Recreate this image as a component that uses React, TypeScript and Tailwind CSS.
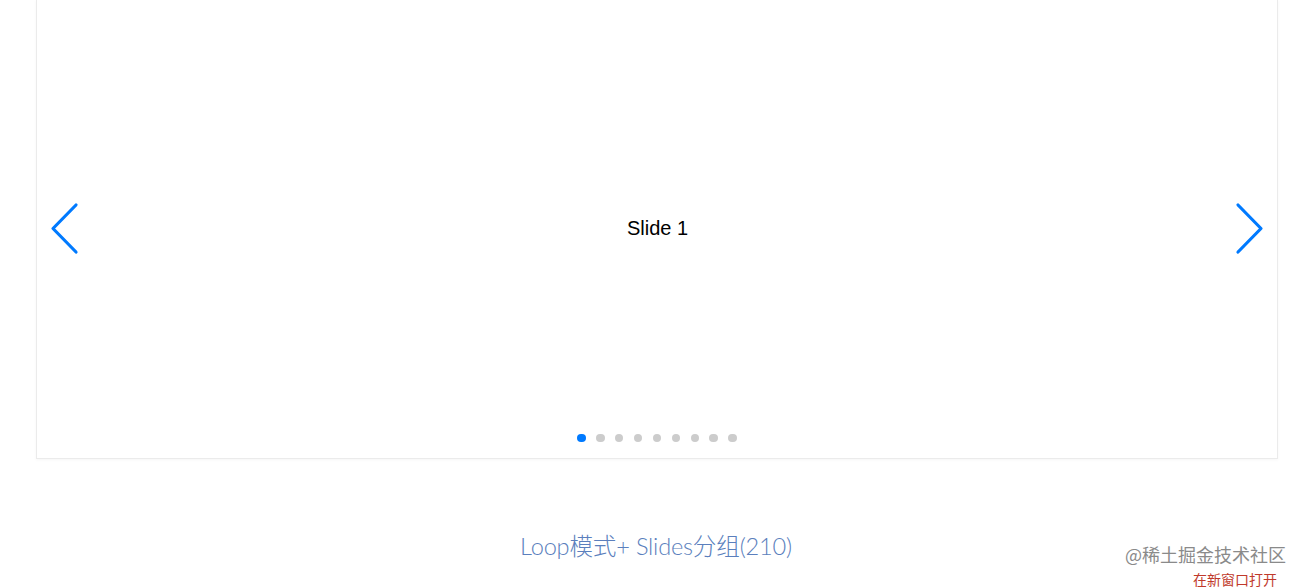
const dots = Array.from({ length: 9 }, (_, i) => i);

function Arrow({ dir }: { dir: 'prev' | 'next' }) {
  const points = dir === 'prev' ? '29,3 6,26.5 29,50' : '5,3 28,26.5 5,50';
  return (
    <button className="text-[#007aff] shrink-0">
      <svg width="34" height="54" viewBox="0 0 34 54" fill="none">
        <polyline points={points} stroke="currentColor" strokeWidth="3.2" strokeLinecap="round" strokeLinejoin="round" />
      </svg>
    </button>
  );
}

export default function App() {
  return (
    <div className="relative h-[587px] w-[1304px] overflow-hidden bg-white font-['Liberation_Sans',sans-serif]">
      {/* Swiper box */}
      <div className="ml-[36px] mr-[26px] h-[459px] border-x border-b border-[#ebebeb] shadow-[0_1px_3px_rgba(0,0,0,0.04)] relative flex items-center justify-between px-[10px] pb-[1px]">
        <Arrow dir="prev" />
        <span className="text-[20px] text-black pl-[1px] pb-[2px]">Slide 1</span>
        <Arrow dir="next" />

        {/* pagination overlays the slide */}
        <div className="absolute bottom-[16px] left-0 right-0 flex justify-center gap-[10.4px]">
          {dots.map((i) => (
            <span
              key={i}
              className={i === 0 ? 'h-[8.5px] w-[8.5px] rounded-full bg-[#007aff]' : 'h-[8.5px] w-[8.5px] rounded-full bg-[#cccccc]'}
            />
          ))}
        </div>
      </div>

      {/* Section title */}
      <div className="mt-[70px] flex justify-center pl-[8px]">
        <h2 className="text-[23.6px] font-light text-[#5b7fbd] font-['Lato','Noto_Sans_CJK_SC',sans-serif] tracking-[-0.2px]">
          Loop模式+ Slides分组(210)
        </h2>
      </div>

      {/* Watermark overlay */}
      <div className="absolute right-[18px] top-[545px] flex flex-col items-end leading-none font-['Noto_Sans_CJK_SC',sans-serif]">
        <span className="text-[18px] text-[#8a8a8a]">@稀土掘金技术社区</span>
        <span className="mt-[9px] mr-[9px] text-[14px] text-[#c0392b]">在新窗口打开</span>
      </div>
    </div>
  );
}
